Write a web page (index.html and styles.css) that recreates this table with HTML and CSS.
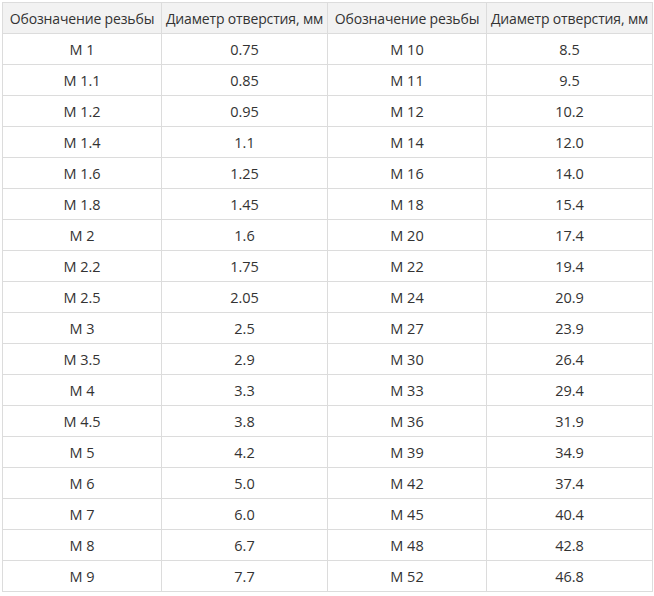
FILE: index.html
```html
<!DOCTYPE html>
<html lang="ru">
<head>
<meta charset="utf-8">
<link rel="stylesheet" href="styles.css">
</head>
<body>
<table class="thread-table">
<thead>
<tr><th>Обозначение резьбы</th><th>Диаметр отверстия, мм</th><th>Обозначение резьбы</th><th>Диаметр отверстия, мм</th></tr>
</thead>
<tbody>
<tr><td>M 1</td><td>0.75</td><td>M 10</td><td>8.5</td></tr>
<tr><td>M 1.1</td><td>0.85</td><td>M 11</td><td>9.5</td></tr>
<tr><td>M 1.2</td><td>0.95</td><td>M 12</td><td>10.2</td></tr>
<tr><td>M 1.4</td><td>1.1</td><td>M 14</td><td>12.0</td></tr>
<tr><td>M 1.6</td><td>1.25</td><td>M 16</td><td>14.0</td></tr>
<tr><td>M 1.8</td><td>1.45</td><td>M 18</td><td>15.4</td></tr>
<tr><td>M 2</td><td>1.6</td><td>M 20</td><td>17.4</td></tr>
<tr><td>M 2.2</td><td>1.75</td><td>M 22</td><td>19.4</td></tr>
<tr><td>M 2.5</td><td>2.05</td><td>M 24</td><td>20.9</td></tr>
<tr><td>M 3</td><td>2.5</td><td>M 27</td><td>23.9</td></tr>
<tr><td>M 3.5</td><td>2.9</td><td>M 30</td><td>26.4</td></tr>
<tr><td>M 4</td><td>3.3</td><td>M 33</td><td>29.4</td></tr>
<tr><td>M 4.5</td><td>3.8</td><td>M 36</td><td>31.9</td></tr>
<tr><td>M 5</td><td>4.2</td><td>M 39</td><td>34.9</td></tr>
<tr><td>M 6</td><td>5.0</td><td>M 42</td><td>37.4</td></tr>
<tr><td>M 7</td><td>6.0</td><td>M 45</td><td>40.4</td></tr>
<tr><td>M 8</td><td>6.7</td><td>M 48</td><td>42.8</td></tr>
<tr><td>M 9</td><td>7.7</td><td>M 52</td><td>46.8</td></tr>
</tbody>
</table>
</body>
</html>
```
FILE: styles.css
```css
html, body {
  margin: 0;
  padding: 0;
  background: #ffffff;
}
body {
  padding: 2px 0 0 2px;
  font-family: "Open Sans", "Liberation Sans", sans-serif;
  color: #333333;
}
.thread-table {
  border-collapse: collapse;
  table-layout: fixed;
  width: 648px;
}
.thread-table th,
.thread-table td {
  border: 1px solid #dcdcdc;
  height: 30px;
  padding: 0;
  text-align: center;
  vertical-align: middle;
  font-size: 14.5px;
  font-weight: 400;
  white-space: nowrap;
  overflow: hidden;
}
.thread-table th {
  background: #f2f2f2;
  font-size: 14px;
  letter-spacing: -0.15px;
}
.thread-table th:nth-child(1),
.thread-table th:nth-child(3) { width: 158px; }
.thread-table th:nth-child(2) { width: 165px; }
.thread-table th:nth-child(4) { width: 165px; }
```
